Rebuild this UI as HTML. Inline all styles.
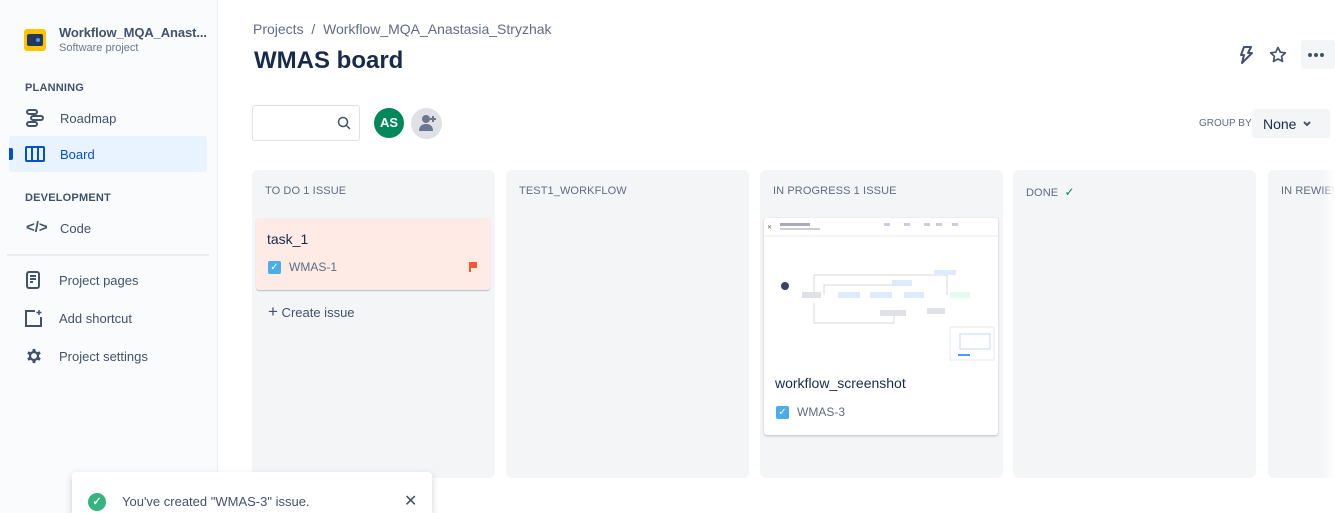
<!DOCTYPE html>
<html><head><meta charset="utf-8"><style>
*{box-sizing:border-box;margin:0;padding:0}
html,body{width:1335px;height:513px;overflow:hidden}
body{font-family:"Liberation Sans",sans-serif;background:#fff;position:relative;color:#172b4d}
.sb{position:absolute;left:0;top:0;width:218px;height:513px;background:#fafbfc;border-right:1px solid #ebecf0}
.abs{position:absolute}
.nav{position:absolute;left:24px;font-size:13px;color:#42526e}
.hd{position:absolute;left:25px;font-size:11px;font-weight:bold;color:#42526e;letter-spacing:.2px}
.col{position:absolute;top:170px;height:308px;width:243px;background:#f4f5f7;border-radius:6px}
.ct{position:absolute;left:13px;top:15px;font-size:11px;color:#5e6c84;letter-spacing:.1px}
</style></head><body>
<div class="sb">
  <div class="abs" style="left:24px;top:29px;width:22px;height:22px;background:#ffc400;border-radius:3px"><div style="position:absolute;left:3px;top:5px;width:16px;height:12px;background:#253858;border-radius:2px"></div><div style="position:absolute;left:12px;top:9px;width:4px;height:4px;background:#4c9aff;border-radius:2px"></div></div>
  <div class="abs" style="left:59px;top:25px;font-size:13px;font-weight:bold;color:#42526e;letter-spacing:-.1px">Workflow_MQA_Anast...</div>
  <div class="abs" style="left:59px;top:42px;font-size:11px;color:#6b778c">Software project</div>
  <div class="hd" style="top:82px">PLANNING</div>
  <svg class="abs" style="left:25px;top:108px" width="20" height="20" viewBox="0 0 20 20" fill="none" stroke="#42526e" stroke-width="2"><rect x="2" y="2" width="10" height="4" rx="2"/><rect x="6" y="8" width="12" height="4" rx="2"/><rect x="2" y="14" width="10" height="4" rx="2"/></svg>
  <div class="nav" style="left:60px;top:111px">Roadmap</div>
  <div class="abs" style="left:9px;top:136px;width:198px;height:36px;background:#e9f2ff;border-radius:3px"></div>
  <div class="abs" style="left:9px;top:148px;width:4px;height:12px;background:#0052cc;border-radius:0 2px 2px 0"></div>
  <svg class="abs" style="left:25px;top:145px" width="20" height="18" viewBox="0 0 20 18" fill="none" stroke="#0052cc" stroke-width="2"><rect x="1" y="2" width="18" height="14" rx="1"/><path d="M7 2v14M13 2v14"/></svg>
  <div class="nav" style="left:60px;top:147px;color:#0052cc">Board</div>
  <div class="hd" style="top:192px">DEVELOPMENT</div>
  <div class="abs" style="left:26px;top:219px;font-size:15px;font-weight:bold;color:#42526e">&lt;/&gt;</div>
  <div class="nav" style="left:60px;top:221px">Code</div>
  <div class="abs" style="left:7px;top:254px;width:202px;height:2px;background:#ebecf0"></div>
  <svg class="abs" style="left:26px;top:271px" width="14" height="18" viewBox="0 0 14 18" fill="none" stroke="#42526e" stroke-width="2"><rect x="1" y="1" width="12" height="16" rx="2"/><path d="M4 5h6M4 8h6M4 11h3"/></svg>
  <div class="nav" style="left:59px;top:273px">Project pages</div>
  <svg class="abs" style="left:24px;top:309px" width="19" height="18" viewBox="0 0 19 18" fill="none" stroke="#42526e" stroke-width="2"><path d="M11 2H2v15h15V8"/><path d="M15 1v5M12.5 3.5h5" stroke-width="1.5"/></svg>
  <div class="nav" style="left:59px;top:311px">Add shortcut</div>
  <svg class="abs" style="left:24px;top:346px" width="20" height="20" viewBox="0 0 24 24"><path fill="#42526e" fill-rule="evenodd" d="M13.5 2h-3l-.5 2.8a7.5 7.5 0 00-2 1.1L5.4 4.9 3.9 7.5 6 9.3a7.5 7.5 0 000 2.4l-2.1 1.8 1.5 2.6 2.6-1a7.5 7.5 0 002 1.1l.5 2.8h3l.5-2.8a7.5 7.5 0 002-1.1l2.6 1 1.5-2.6-2.1-1.8a7.5 7.5 0 000-2.4l2.1-1.8-1.5-2.6-2.6 1a7.5 7.5 0 00-2-1.1zM12 14a3.5 3.5 0 110-7 3.5 3.5 0 010 7z" transform="translate(0 1.5)"/></svg>
  <div class="nav" style="left:59px;top:349px">Project settings</div>
</div>

<div class="abs" style="left:253px;top:21px;font-size:14px;color:#5e6c84">Projects &nbsp;/&nbsp; Workflow_MQA_Anastasia_Stryzhak</div>
<div class="abs" style="left:254px;top:47px;font-size:24px;font-weight:bold;color:#172b4d">WMAS board</div>
<svg class="abs" style="left:1238px;top:45px" width="16" height="20" viewBox="0 0 16 20" fill="none" stroke="#42526e" stroke-width="2" stroke-linejoin="round"><path d="M6 2h7l-3 6h4L4 18l2-8H3z"/></svg>
<svg class="abs" style="left:1268px;top:45px" width="20" height="20" viewBox="0 0 24 24" fill="none" stroke="#42526e" stroke-width="2" stroke-linejoin="round"><path d="M12 3l2.7 5.6 6.1.8-4.5 4.2 1.1 6.1L12 16.8l-5.4 2.9 1.1-6.1-4.5-4.2 6.1-.8z"/></svg>
<div class="abs" style="left:1301px;top:40px;width:34px;height:29px;background:#f4f5f7;border-radius:3px"></div>
<svg class="abs" style="left:1307px;top:52px" width="20" height="6"><circle cx="3" cy="3" r="2" fill="#42526e"/><circle cx="9" cy="3" r="2" fill="#42526e"/><circle cx="15" cy="3" r="2" fill="#42526e"/></svg>

<div class="abs" style="left:252px;top:105px;width:108px;height:36px;border:1px solid #dfe1e6;border-radius:3px;background:#fff"></div>
<svg class="abs" style="left:337px;top:116px" width="14" height="14" viewBox="0 0 14 14" fill="none" stroke="#42526e" stroke-width="1.5"><circle cx="6" cy="6" r="4.5"/><path d="M9.5 9.5L13 13"/></svg>
<div class="abs" style="left:374px;top:108px;width:30px;height:30px;border-radius:50%;background:#00875a;color:#fff;font-size:13px;font-weight:bold;text-align:center;line-height:30px">AS</div>
<div class="abs" style="left:411px;top:108px;width:31px;height:31px;border-radius:50%;background:#dfe1e6"></div>
<svg class="abs" style="left:418px;top:113px" width="20" height="20" viewBox="0 0 20 20" fill="#6b778c"><circle cx="8" cy="6" r="4"/><path d="M1 18c0-5 3-7 7-7s7 2 7 7z"/><path d="M15 3v6M12 6h6" stroke="#6b778c" stroke-width="2"/></svg>
<div class="abs" style="left:1199px;top:118px;font-size:10px;color:#5e6c84">GROUP BY</div>
<div class="abs" style="left:1252px;top:109px;width:78px;height:29px;background:#f4f5f7;border-radius:3px;font-size:14px;color:#172b4d;padding:7px 0 0 11px">None</div>
<svg class="abs" style="left:1302px;top:120px" width="10" height="7" viewBox="0 0 10 7" fill="none" stroke="#42526e" stroke-width="2"><path d="M2 2l3 3 3-3"/></svg>

<div class="col" style="left:252px"><div class="ct">TO DO 1 ISSUE</div>
  <div class="abs" style="left:4px;top:48px;width:234px;height:72px;background:#ffebe6;border-radius:3px;box-shadow:0 1px 1px rgba(9,30,66,.25)">
    <div class="abs" style="left:11px;top:13px;font-size:14px">task_1</div>
    <div class="abs" style="left:12px;top:43px;width:13px;height:13px;background:#4bade8;border-radius:2px;color:#fff;font-size:10px;text-align:center;line-height:13px">✓</div>
    <div class="abs" style="left:33px;top:42px;font-size:12px;color:#5e6c84">WMAS-1</div>
    <svg class="abs" style="left:212px;top:44px" width="10" height="10" viewBox="0 0 10 10"><path fill="#ff5630" d="M1 0h8v6H3v4H1z"/></svg>
  </div>
  <div class="abs" style="left:16px;top:132px;font-size:13px;color:#42526e"><span style="font-size:17px">+</span> Create issue</div>
</div>
<div class="col" style="left:506px"><div class="ct">TEST1_WORKFLOW</div></div>
<div class="col" style="left:760px"><div class="ct">IN PROGRESS 1 ISSUE</div>
  <div class="abs" style="left:4px;top:48px;width:234px;height:217px;background:#fff;border-radius:3px;box-shadow:0 1px 2px rgba(9,30,66,.25);overflow:hidden">
    <svg width="234" height="145" viewBox="0 0 234 145">
      <line x1="0" y1="18" x2="234" y2="18" stroke="#eee"/>
      <text x="3" y="11" font-size="6" fill="#666">✕</text>
      <rect x="16" y="5" width="30" height="3" fill="#aab"/><rect x="16" y="10" width="40" height="2" fill="#ccd"/>
      <g fill="#ccd"><rect x="120" y="5" width="6" height="3"/><rect x="140" y="5" width="6" height="3"/><rect x="160" y="5" width="6" height="3"/><rect x="172" y="5" width="6" height="3"/><rect x="188" y="5" width="6" height="3"/></g>
      <g fill="none" stroke="#d4d8de" stroke-width="1"><path d="M50 77V57h133v20M60 77V67h70M50 85v20h80v-10"/></g>
      <circle cx="21" cy="68" r="4" fill="#344563"/>
      <rect x="38" y="74" width="19" height="6" fill="#dfe1e6"/>
      <rect x="74" y="74" width="22" height="6" fill="#deebff"/>
      <rect x="106" y="74" width="22" height="6" fill="#deebff"/>
      <rect x="140" y="74" width="20" height="6" fill="#deebff"/>
      <rect x="128" y="62" width="20" height="6" fill="#deebff"/>
      <rect x="170" y="52" width="22" height="5" fill="#deebff"/>
      <rect x="186" y="74" width="20" height="6" fill="#e3fcef"/>
      <rect x="116" y="92" width="26" height="6" fill="#dfe1e6"/>
      <rect x="163" y="90" width="18" height="6" fill="#dfe1e6"/>
      <rect x="186" y="109" width="44" height="33" fill="#fff" stroke="#e6e8eb"/>
      <rect x="196" y="116" width="30" height="15" fill="none" stroke="#c6d8f5"/>
      <rect x="194" y="136" width="12" height="2" fill="#4c9aff"/>
    </svg>
    <div class="abs" style="left:11px;top:157px;font-size:14px">workflow_screenshot</div>
    <div class="abs" style="left:12px;top:188px;width:13px;height:13px;background:#4bade8;border-radius:2px;color:#fff;font-size:10px;text-align:center;line-height:13px">✓</div>
    <div class="abs" style="left:33px;top:187px;font-size:12px;color:#5e6c84">WMAS-3</div>
  </div>
</div>
<div class="col" style="left:1013px"><div class="ct">DONE &nbsp;<span style="color:#00875a;font-size:12px">✓</span></div></div>
<div class="col" style="left:1268px;width:80px"><div class="ct">IN REWIEW</div></div>
<div class="abs" style="left:1322px;top:170px;width:13px;height:308px;background:linear-gradient(90deg,rgba(255,255,255,0),#fff)"></div>

<div class="abs" style="left:72px;top:472px;width:360px;height:41px;background:#fff;border-radius:4px 4px 0 0;box-shadow:0 3px 8px rgba(9,30,66,.2)">
  <div class="abs" style="left:16px;top:21px;width:18px;height:18px;border-radius:50%;background:#36b37e;color:#fff;font-size:11px;text-align:center;line-height:18px;font-weight:bold">✓</div>
  <div class="abs" style="left:50px;top:22px;font-size:13px;color:#42526e">You've created "WMAS-3" issue.</div>
  <div class="abs" style="left:332px;top:19px;font-size:16px;color:#42526e">✕</div>
</div>
</body></html>
